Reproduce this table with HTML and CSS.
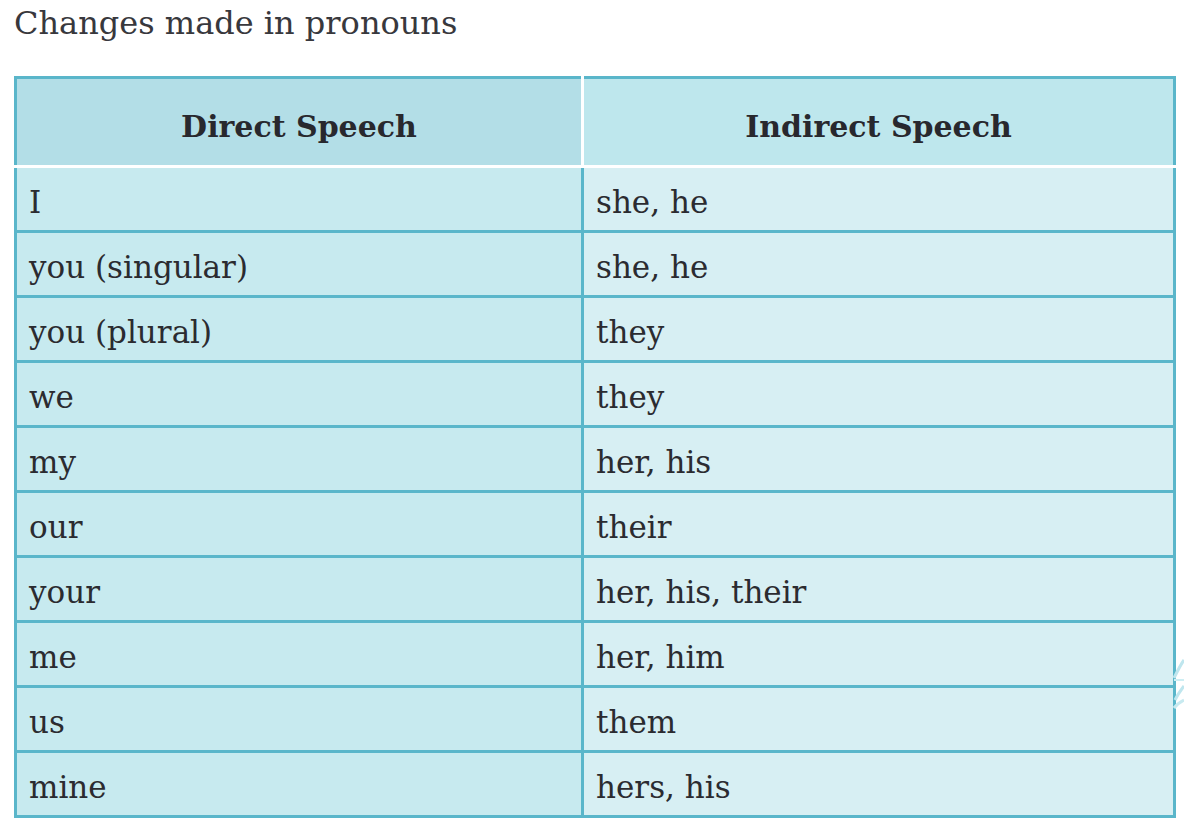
FILE: index.html
```html
<!DOCTYPE html>
<html>
<head>
<meta charset="utf-8">
<link rel="stylesheet" href="styles.css">
</head>
<body>
<div class="page">
  <p class="title">Changes made in pronouns</p>
  <table class="pron">
    <thead>
      <tr><th class="c1">Direct Speech</th><th class="c2">Indirect Speech</th></tr>
    </thead>
    <tbody>
      <tr><td class="c1">I</td><td class="c2">she, he</td></tr>
      <tr><td class="c1">you (singular)</td><td class="c2">she, he</td></tr>
      <tr><td class="c1">you (plural)</td><td class="c2">they</td></tr>
      <tr><td class="c1">we</td><td class="c2">they</td></tr>
      <tr><td class="c1">my</td><td class="c2">her, his</td></tr>
      <tr><td class="c1">our</td><td class="c2">their</td></tr>
      <tr><td class="c1">your</td><td class="c2">her, his, their</td></tr>
      <tr><td class="c1">me</td><td class="c2">her, him</td></tr>
      <tr><td class="c1">us</td><td class="c2">them</td></tr>
      <tr><td class="c1">mine</td><td class="c2">hers, his</td></tr>
    </tbody>
  </table>
  <svg class="deco" width="12" height="90" viewBox="0 0 12 90" aria-hidden="true">
    <path d="M2 28 C6 20 9 14 12 10" fill="none" stroke="#bfe6ee" stroke-width="3"/>
    <path d="M2 30 L12 30" fill="none" stroke="#cdeef3" stroke-width="2"/>
    <path d="M3 50 C6 44 9 40 12 36" fill="none" stroke="#bfe6ee" stroke-width="3"/>
    <path d="M2 58 C5 54 8 52 12 50" fill="none" stroke="#c8eaf0" stroke-width="3"/>
  </svg>
</div>
</body>
</html>
```
FILE: styles.css
```css
html, body {
  margin: 0;
  padding: 0;
  background: #ffffff;
}
.page {
  position: relative;
  padding: 0 0 0 14px;
  font-family: "DejaVu Serif", "Liberation Serif", serif;
  color: #2b2b30;
}
.title {
  margin: 0;
  padding-top: 2px;
  height: 74px;
  font-size: 32px;
  line-height: 42px;
  color: #38383d;
}
.pron {
  width: 1162px;
  border-collapse: collapse;
  border: 3px solid #5ab6ca;
  table-layout: fixed;
}
.pron th, .pron td {
  font-size: 31px;
  text-align: left;
  padding: 6px 12px 0 12px;
}
.pron th {
  height: 77px;
  padding-top: 9px;
  font-size: 30px;
  text-align: center;
  font-weight: bold;
  color: #28282e;
  border-bottom: 3px solid #ffffff;
}
.pron th.c1 { width: 540px; background: #b3dee7; border-right: 3px solid #ffffff; }
.pron th.c2 { background: #bee7ed; }
.pron td {
  height: 56px;
  border-top: 3px solid #5ab6ca;
}
.pron tbody tr:first-child td { border-top: none; }
.pron td.c1 { background: #c7eaef; border-right: 3px solid #5ab6ca; }
.pron td.c2 { background: #d7eff3; }
.deco {
  position: absolute;
  left: 1172px;
  top: 650px;
}
```
